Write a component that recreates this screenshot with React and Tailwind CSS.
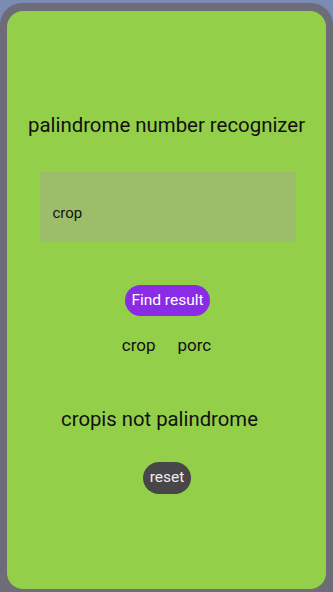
export default function App() {
  return (
    <div className="w-[333px] h-[592px] bg-[#7b8bb3] pt-[3px] overflow-hidden" style={{ fontFamily: 'Roboto, "Liberation Sans", sans-serif' }}>
      <div className="h-[592px] bg-[#6d6c78] rounded-t-[22px] px-[7px] pt-[8px]">
        <div className="h-[578px] bg-[#94cf4a] rounded-[16px] flex flex-col items-center">
          <h1 className="mt-[101px] text-[20.4px] leading-[26px] text-[#111]">
            palindrome number recognizer
          </h1>
          <div className="mt-[34px] w-[256px] h-[69px] bg-[#9cbe6a] flex items-center px-[13px] pt-[14px] ml-[2px]">
            <span className="text-[15px] text-[#111]">crop</span>
          </div>
          <button className="mt-[44px] h-[31px] px-[6px] ml-[2px] rounded-full bg-[#8a2ce6] text-[15.5px] text-white">
            Find result
          </button>
          <div className="mt-[19px] flex gap-[22px] text-[17px] leading-[20px] text-[#111]">
            <span>crop</span>
            <span>porc</span>
          </div>
          <p className="mt-[52px] text-[20.3px] leading-[24px] text-[#111] -ml-[14px]">cropis not palindrome</p>
          <button className="mt-[31px] h-[32px] px-[7px] ml-[1px] rounded-full bg-[#474648] text-[15.5px] text-[#eee]">
            reset
          </button>
        </div>
      </div>
    </div>
  );
}
